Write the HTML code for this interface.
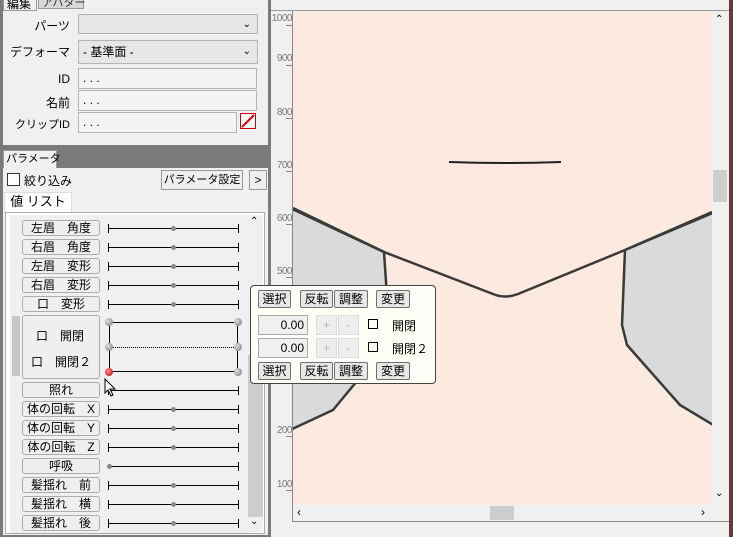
<!DOCTYPE html><html><head><meta charset="utf-8"><style>
*{box-sizing:border-box;margin:0;padding:0;white-space:nowrap}
body{width:733px;height:537px;overflow:hidden;background:#7a7a7a;font-family:"Liberation Sans","Noto Sans CJK JP",sans-serif;font-size:12px;color:#000;position:relative}
.a{position:absolute}
.lbl{position:absolute;text-align:right;width:70px}
.inp{position:absolute;background:#f4f4f4;border:1px solid #b4b4b4;padding-left:4px;line-height:18px}
.sel{position:absolute;background:#e6e6e6;border:1px solid #b4b4b4;padding-left:4px;line-height:20px}
.btn{position:absolute;background:#efefef;border:1px solid #adadad;border-radius:3px;text-align:center;line-height:14px;height:16px}
.pb{position:absolute;background:#e8e8e8;border:1px solid #707070;border-radius:2px;text-align:center;line-height:16px;height:18px}
.sl{position:absolute;left:108px;width:131px;height:9px}
.sl .l{position:absolute;left:0;right:0;top:4px;height:1px;background:#000}
.sl .e1,.sl .e2{position:absolute;top:0;width:1px;height:9px;background:#000}
.sl .e1{left:0}.sl .e2{right:0}
.sl .d{position:absolute;left:63px;top:2px;width:5px;height:5px;border-radius:50%;background:#888}
.rl{position:absolute;left:271px;width:21px;text-align:right;font-size:10px;color:#777;letter-spacing:-0.5px}
.tk{position:absolute;left:286px;width:6px;height:1px;background:#888}
.knob{position:absolute;width:8px;height:8px;border-radius:50%;background:radial-gradient(circle at 35% 35%,#ddd,#777)}
</style></head><body>
<div class="a" style="left:3px;top:0;width:265px;height:145px;background:#f0f0f0"></div>
<div class="a" style="left:3px;top:-4px;width:34px;height:15px;background:#f0f0f0;border:1px solid #999;line-height:14px;padding-left:3px">編集</div>
<div class="a" style="left:38px;top:-4px;width:46px;height:13px;background:#d8d8d8;border:1px solid #999;line-height:12px;padding-left:3px;color:#333;font-size:11px">アバター</div>
<div class="lbl" style="left:0;top:17px">パーツ</div>
<div class="sel" style="left:78px;top:14px;width:180px;height:20px"><span style="position:absolute;right:6px;top:0;font-size:10px">&#8964;</span></div>
<div class="lbl" style="left:0;top:43px">デフォーマ</div>
<div class="sel" style="left:78px;top:40px;width:180px;height:24px;line-height:22px">- 基準面 -<span style="position:absolute;right:6px;top:0;font-size:10px">&#8964;</span></div>
<div class="lbl" style="left:0;top:72px">ID</div>
<div class="inp" style="left:78px;top:68px;width:179px;height:21px">. . .</div>
<div class="lbl" style="left:0;top:94px">名前</div>
<div class="inp" style="left:78px;top:90px;width:179px;height:21px">. . .</div>
<div class="lbl" style="left:0;top:116px;font-size:11px">クリップID</div>
<div class="inp" style="left:78px;top:112px;width:159px;height:21px">. . .</div>
<svg class="a" style="left:240px;top:113px" width="16" height="16"><rect x="0.5" y="0.5" width="15" height="15" fill="#fff" stroke="#c00"/><line x1="2" y1="14" x2="14" y2="2" stroke="#d00" stroke-width="2"/></svg>
<div class="a" style="left:3px;top:150px;width:54px;height:18px;background:#f0f0f0;border:1px solid #999;border-bottom:none;line-height:16px;padding-left:2px;font-size:11px">パラメータ</div>
<div class="a" style="left:3px;top:168px;width:265px;height:367px;background:#f0f0f0"></div>
<div class="a" style="left:7px;top:173px;width:13px;height:13px;border:1px solid #333;background:#fff"></div>
<div class="a" style="left:24px;top:172px">絞り込み</div>
<div class="a" style="left:161px;top:170px;width:82px;height:20px;border:1px solid #999;background:#efefef;text-align:center;line-height:18px;font-size:11px">パラメータ設定</div>
<div class="a" style="left:249px;top:170px;width:18px;height:20px;border:1px solid #999;background:#efefef;text-align:center;line-height:18px">&gt;</div>
<div class="a" style="left:4px;top:192px;width:68px;height:20px;background:#fff;border:1px solid #ddd;border-bottom:none;text-align:center;line-height:18px;font-size:13px">値 リスト</div>
<div class="a" style="left:5px;top:212px;width:260px;height:322px;background:#fff;border:1px solid #aaa"></div>
<div class="a" style="left:10px;top:215px;width:238px;height:318px;background:#f0f0f0"></div>
<div class="a" style="left:248px;top:215px;width:15px;height:317px;background:#f0f0f0"></div>
<div class="a" style="left:248px;top:355px;width:15px;height:162px;background:#cdcdcd"></div>
<div class="a" style="left:250px;top:216px;font-size:10px">&#8963;</div>
<div class="a" style="left:250px;top:516px;font-size:10px">&#8964;</div>
<div class="a" style="left:12px;top:316px;width:8px;height:60px;background:#c8c8c8"></div>

<div class="btn" style="left:22px;top:220px;width:78px">左眉　角度</div><div class="sl" style="top:224px"><div class="l"></div><div class="e1"></div><div class="e2"></div><div class="d"></div></div>
<div class="btn" style="left:22px;top:239px;width:78px">右眉　角度</div><div class="sl" style="top:243px"><div class="l"></div><div class="e1"></div><div class="e2"></div><div class="d"></div></div>
<div class="btn" style="left:22px;top:258px;width:78px">左眉　変形</div><div class="sl" style="top:262px"><div class="l"></div><div class="e1"></div><div class="e2"></div><div class="d"></div></div>
<div class="btn" style="left:22px;top:277px;width:78px">右眉　変形</div><div class="sl" style="top:281px"><div class="l"></div><div class="e1"></div><div class="e2"></div><div class="d"></div></div>
<div class="btn" style="left:22px;top:296px;width:78px">口　変形</div><div class="sl" style="top:300px"><div class="l"></div><div class="e1"></div><div class="e2"></div><div class="d"></div></div>
<div class="a" style="left:22px;top:315px;width:78px;height:64px;background:#efefef;border:1px solid #adadad;border-radius:3px"></div>
<div class="a" style="left:36px;top:327px">口　開閉</div>
<div class="a" style="left:31px;top:353px">口　開閉２</div>
<div class="a" style="left:109px;top:322px;width:129px;height:50px;border:1px solid #000"></div>
<div class="a" style="left:109px;top:347px;width:129px;border-top:1px dotted #000"></div>
<div class="knob" style="left:105px;top:318px"></div><div class="knob" style="left:234px;top:318px"></div>
<div class="knob" style="left:105px;top:343px"></div><div class="knob" style="left:234px;top:343px"></div>
<div class="knob" style="left:105px;top:368px;background:radial-gradient(circle at 35% 35%,#f88,#c00)"></div><div class="knob" style="left:234px;top:368px"></div>
<div class="btn" style="left:22px;top:382px;width:78px">照れ</div><div class="sl" style="top:386px"><div class="l"></div><div class="e1"></div><div class="e2"></div></div>
<svg class="a" style="left:104px;top:378px" width="14" height="20"><path d="M1 1 L1 15 L4 12 L7 18 L9 17 L6 11 L11 11 Z" fill="#fff" stroke="#000"/></svg>
<div class="btn" style="left:22px;top:401px;width:78px">体の回転　X</div><div class="sl" style="top:405px"><div class="l"></div><div class="e1"></div><div class="e2"></div><div class="d"></div></div>
<div class="btn" style="left:22px;top:420px;width:78px">体の回転　Y</div><div class="sl" style="top:424px"><div class="l"></div><div class="e1"></div><div class="e2"></div><div class="d"></div></div>
<div class="btn" style="left:22px;top:439px;width:78px">体の回転　Z</div><div class="sl" style="top:443px"><div class="l"></div><div class="e1"></div><div class="e2"></div><div class="d"></div></div>
<div class="btn" style="left:22px;top:458px;width:78px">呼吸</div><div class="sl" style="top:462px"><div class="l"></div><div class="e2"></div><div class="d" style="left:-1px"></div></div>
<div class="btn" style="left:22px;top:477px;width:78px">髪揺れ　前</div><div class="sl" style="top:481px"><div class="l"></div><div class="e1"></div><div class="e2"></div><div class="d"></div></div>
<div class="btn" style="left:22px;top:496px;width:78px">髪揺れ　横</div><div class="sl" style="top:500px"><div class="l"></div><div class="e1"></div><div class="e2"></div><div class="d"></div></div>
<div class="btn" style="left:22px;top:515px;width:78px">髪揺れ　後</div><div class="sl" style="top:519px"><div class="l"></div><div class="e1"></div><div class="e2"></div><div class="d"></div></div>

<div class="a" style="left:271px;top:0;width:459px;height:537px;background:#f0f0f0"></div>
<div class="a" style="left:292px;top:11px;width:1px;height:511px;background:#888"></div>
<div class="a" style="left:271px;top:10px;width:459px;height:1px;background:#999"></div>
<div class="a" style="left:292px;top:521px;width:438px;height:1px;background:#888"></div>
<div class="a" style="left:729px;top:0;width:4px;height:537px;background:#6a3a3a"></div>
<svg class="a" style="left:293px;top:12px" width="419" height="493">
<rect width="419" height="493" fill="#fce9df"/>
<path d="M-3 196 L91 240 L95 300 L69 363 L40 398 L-3 418 Z" fill="#dadada" stroke="#3a3a3a" stroke-width="2.5" stroke-linejoin="round"/>
<path d="M422 200 L332 238 L329 313 L334 333 L387 393 L422 414 Z" fill="#dadada" stroke="#3a3a3a" stroke-width="2.5" stroke-linejoin="round"/>
<path d="M0 196 L91 240 L200 282 Q212 287 225 282 L332 238 L419 200" fill="none" stroke="#3a3a3a" stroke-width="2.5" stroke-linejoin="round"/>
<path d="M156 150 Q210 152 268 150" stroke="#222" stroke-width="2" fill="none"/>
</svg>
<div class="rl" style="top:13px">1000</div><div class="tk" style="top:25px"></div>
<div class="rl" style="top:53px">900</div><div class="tk" style="top:65px"></div>
<div class="rl" style="top:107px">800</div><div class="tk" style="top:118px"></div>
<div class="rl" style="top:160px">700</div><div class="tk" style="top:171px"></div>
<div class="rl" style="top:213px">600</div><div class="tk" style="top:224px"></div>
<div class="rl" style="top:266px">500</div><div class="tk" style="top:277px"></div>
<div class="rl" style="top:372px">300</div><div class="tk" style="top:383px"></div>
<div class="rl" style="top:425px">200</div><div class="tk" style="top:436px"></div>
<div class="rl" style="top:479px">100</div><div class="tk" style="top:490px"></div>
<div class="a" style="left:713px;top:170px;width:14px;height:32px;background:#cdcdcd"></div>
<div class="a" style="left:715px;top:14px;font-size:10px">&#8963;</div>
<div class="a" style="left:715px;top:488px;font-size:10px">&#8964;</div>
<div class="a" style="left:490px;top:506px;width:24px;height:14px;background:#cdcdcd"></div>
<div class="a" style="left:297px;top:505px;font-size:12px">&lsaquo;</div>
<div class="a" style="left:701px;top:505px;font-size:12px">&rsaquo;</div>
<div class="a" style="left:250px;top:285px;width:186px;height:99px;background:#fffff8;border:1px solid #444;border-radius:4px"></div>
<div class="pb" style="left:258px;top:290px;width:33px">選択</div>
<div class="pb" style="left:300px;top:290px;width:33px">反転</div>
<div class="pb" style="left:334px;top:290px;width:34px">調整</div>
<div class="pb" style="left:376px;top:290px;width:34px">変更</div>
<div class="a" style="left:258px;top:315px;width:50px;height:20px;background:#f0f0f0;border:1px solid #aaa;text-align:right;padding-right:3px;line-height:18px">0.00</div>
<div class="a" style="left:316px;top:315px;width:21px;height:20px;background:#eee;border:1px solid #ddd;color:#bbb;text-align:center;line-height:18px">+</div>
<div class="a" style="left:338px;top:315px;width:21px;height:20px;background:#eee;border:1px solid #ddd;color:#bbb;text-align:center;line-height:18px">-</div>
<div class="a" style="left:368px;top:319px;width:10px;height:10px;border:1px solid #000"></div>
<div class="a" style="left:392px;top:317px">開閉</div>
<div class="a" style="left:258px;top:338px;width:50px;height:20px;background:#f0f0f0;border:1px solid #aaa;text-align:right;padding-right:3px;line-height:18px">0.00</div>
<div class="a" style="left:316px;top:338px;width:21px;height:20px;background:#eee;border:1px solid #ddd;color:#bbb;text-align:center;line-height:18px">+</div>
<div class="a" style="left:338px;top:338px;width:21px;height:20px;background:#eee;border:1px solid #ddd;color:#bbb;text-align:center;line-height:18px">-</div>
<div class="a" style="left:368px;top:342px;width:10px;height:10px;border:1px solid #000"></div>
<div class="a" style="left:392px;top:340px">開閉２</div>
<div class="pb" style="left:258px;top:362px;width:33px">選択</div>
<div class="pb" style="left:300px;top:362px;width:33px">反転</div>
<div class="pb" style="left:334px;top:362px;width:34px">調整</div>
<div class="pb" style="left:376px;top:362px;width:34px">変更</div>
</body></html>
